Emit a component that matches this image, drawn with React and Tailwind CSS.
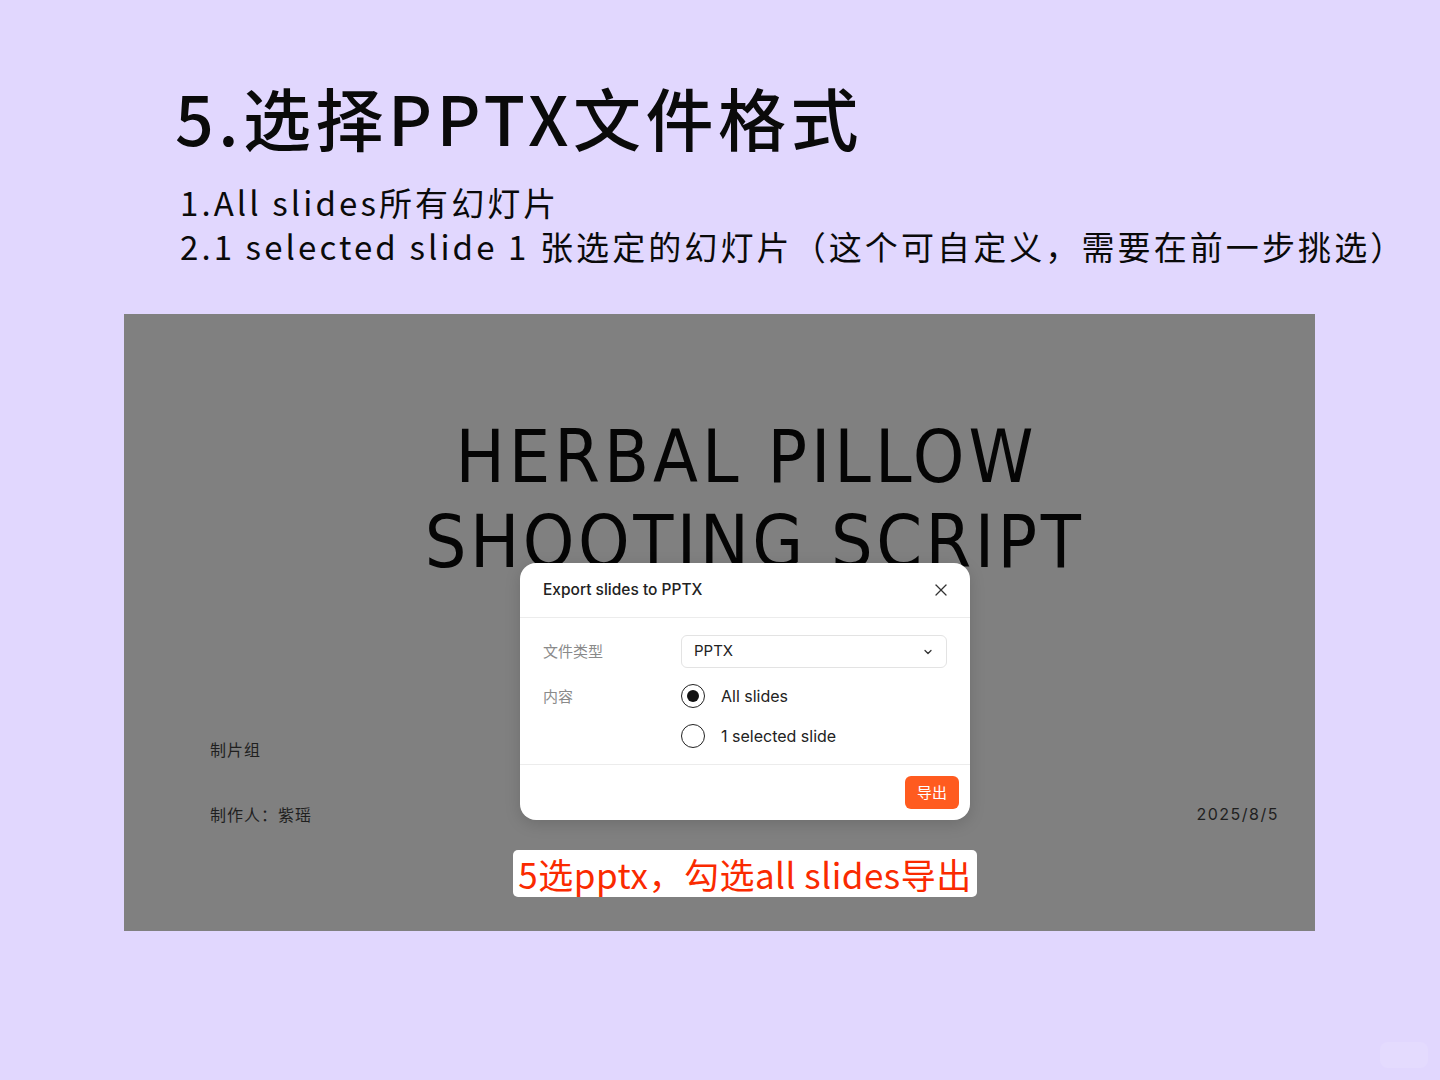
import { X, ChevronDown } from "lucide-react";

const cjk = { fontFamily: '"Noto Sans CJK SC", "Noto Sans", sans-serif' };
const ui = { fontFamily: 'Inter, "Noto Sans CJK SC", sans-serif' };
const din = { fontFamily: '"DejaVu Sans Condensed", "DejaVu Sans", sans-serif' };

function Radio({ checked, label }) {
  return (
    <label className="flex items-center gap-4 h-[24px]">
      <span className="size-[24px] rounded-full border-[1.5px] border-[#222] flex items-center justify-center">
        {checked && <span className="size-[12px] rounded-full bg-[#111]" />}
      </span>
      <span className="text-[16px] text-[#222]">{label}</span>
    </label>
  );
}

function ExportDialog() {
  return (
    <div
      className="absolute left-[396px] top-[249px] w-[450px] rounded-[16px] bg-white shadow-[0_4px_16px_rgba(0,0,0,0.15)]"
      style={ui}
    >
      <div className="flex items-center justify-between h-[55px] pl-[23px] pr-[19px] border-b border-[#ececec]">
        <h3 className="text-[15.5px] font-medium text-[#222]">Export slides to PPTX</h3>
        <X className="size-[20px] text-[#333]" strokeWidth={1.5} />
      </div>
      <div className="px-[23px] pt-[17px] pb-[16px] border-b border-[#ececec]">
        <div className="flex items-center">
          <span className="w-[138px] text-[15px] text-[#8a8a8a]" style={cjk}>文件类型</span>
          <div className="flex-1 h-[33px] rounded-[6px] border border-[#e3e3e3] flex items-center justify-between pl-[12px] pr-[12px]">
            <span className="text-[15px] text-[#222]">PPTX</span>
            <ChevronDown className="size-[12px] text-[#333]" strokeWidth={2.5} />
          </div>
        </div>
        <div className="flex mt-[16px]">
          <span className="w-[138px] text-[15px] text-[#8a8a8a] leading-[24px]" style={cjk}>内容</span>
          <div className="flex flex-col gap-[16px]">
            <Radio checked label="All slides" />
            <Radio label="1 selected slide" />
          </div>
        </div>
      </div>
      <div className="flex justify-end h-[55px] items-center pr-[11px]">
        <button
          className="h-[33px] px-[12px] rounded-[6px] bg-[#ff5b1f] text-white text-[15px]"
          style={cjk}
        >
          导出
        </button>
      </div>
    </div>
  );
}

export default function App() {
  return (
    <div className="w-[1440px] h-[1080px] bg-[#e1d7fe] relative overflow-hidden" style={cjk}>
      <div className="pl-[175px] pt-[75px]">
        <h1 className="text-[68px] leading-[84px] font-medium tracking-[4.5px] text-[#0a0a0a]">
          5.选择PPTX文件格式
        </h1>
        <div className="pl-[5px] mt-[21px] text-[33px] leading-[44px] tracking-[3.1px] text-[#0a0a0a]">
          <p>1.All slides所有幻灯片</p>
          <p>2.1 selected slide 1 张选定的幻灯片（这个可自定义，需要在前一步挑选）</p>
        </div>
      </div>

      <div className="relative ml-[124px] mt-[46px] w-[1191px] h-[617px] bg-[#808080]">
        <div className="flex flex-col items-center pt-[100px] pl-[54px]">
          <p className="text-[73px] leading-[85px] tracking-[4px] text-[#050505]" style={din}>
            HERBAL PILLOW
          </p>
          <p className="text-[73px] leading-[85px] tracking-[3.5px] text-[#050505] pl-[16px]" style={din}>
            SHOOTING SCRIPT
          </p>
        </div>

        <div className="flex justify-between items-end pl-[86px] pr-[36px] mt-[153px]">
          <div className="text-[16px] text-[#1f1f1f] tracking-[1px]">
            <p className="leading-[24px]">制片组</p>
            <p className="leading-[24px] mt-[41px]">制作人：紫瑶</p>
          </div>
          <p className="text-[16px] leading-[24px] tracking-[1.5px] text-[#1f1f1f]" style={ui}>
            2025/8/5
          </p>
        </div>

        <ExportDialog />

        <div className="absolute left-[389px] top-[536px] w-[464px] h-[47px] rounded-[5px] bg-white flex items-center justify-center">
          <span className="text-[35px] leading-[40px] tracking-[0.5px] text-[#fa2a00]" style={cjk}>
            5选pptx，勾选all slides导出
          </span>
        </div>
      </div>

      <div className="absolute right-[12px] bottom-[12px] w-[48px] h-[26px] rounded-[8px] bg-white/10" />
    </div>
  );
}
